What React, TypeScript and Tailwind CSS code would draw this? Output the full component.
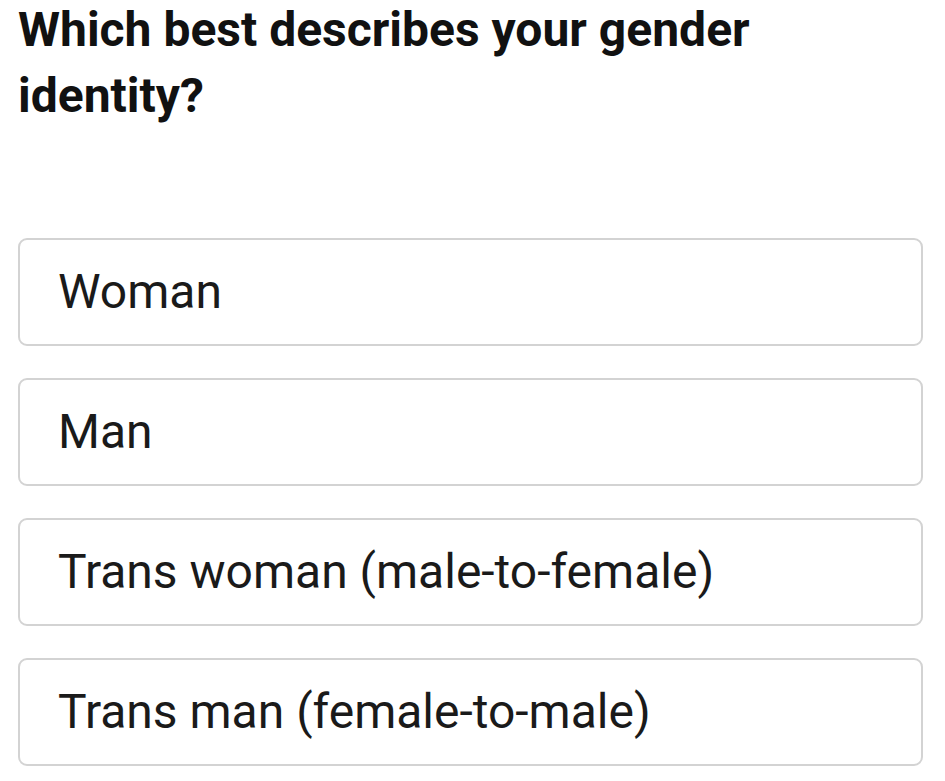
const options = [
  'Woman',
  'Man',
  'Trans woman (male-to-female)',
  'Trans man (female-to-male)',
];

export default function App() {
  return (
    <div className="min-h-screen bg-white pl-[18px] pr-[22px] pt-px font-['Roboto',sans-serif]">
      <h1 className="-mt-[4px] max-w-[800px] text-[48px] font-bold leading-[66px] text-[#111111]">
        Which best describes your gender identity?
      </h1>

      <div className="mt-[109px] flex flex-col gap-[32px]">
        {options.map((label) => (
          <button
            key={label}
            className="flex h-[108px] items-center rounded-[9px] border-2 border-[#d3d3d3] bg-white pl-[38px] text-left text-[48px] text-[#1a1a1a]"
          >
            {label}
          </button>
        ))}
      </div>
    </div>
  );
}
